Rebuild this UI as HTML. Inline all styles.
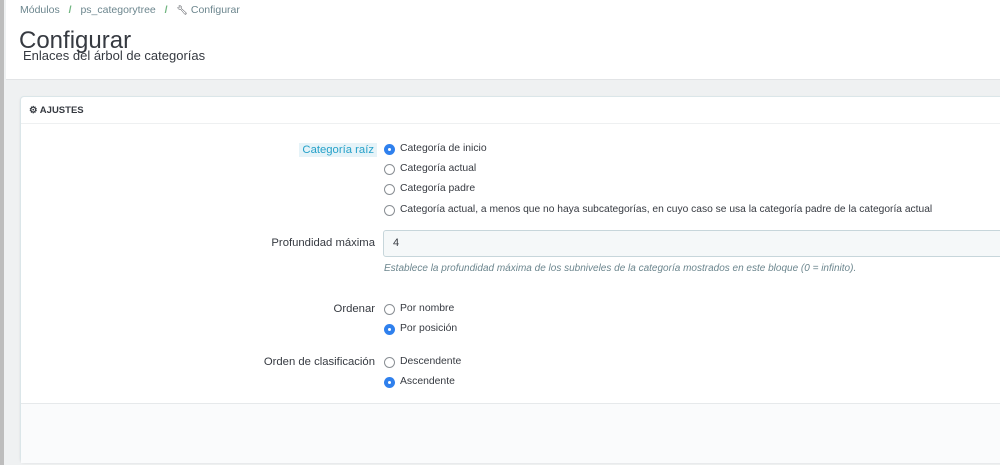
<!DOCTYPE html>
<html><head><meta charset="utf-8"><style>
*{margin:0;padding:0;box-sizing:border-box}
body{width:1000px;height:465px;overflow:hidden;background:#eff1f2;font-family:"Liberation Sans",sans-serif;color:#363a41;position:relative}
.a{position:absolute;white-space:nowrap}
.lbar{position:absolute;left:0;top:0;width:4px;height:465px;background:#bdbdbd}
.head{position:absolute;left:6px;top:0;width:994px;height:80px;background:#fff;border-bottom:1px solid #e2e4e6}
.panel{position:absolute;left:20px;top:96px;width:990px;height:366px;background:#fff;border:1px solid #dbe6e9;border-radius:4px;box-shadow:0 1px 2px rgba(0,0,0,.08)}
.ph{position:absolute;left:0;top:0;width:100%;height:27px;border-bottom:1px solid #eef0f1}
.foot{position:absolute;left:0;top:306px;width:100%;height:60px;background:#fafbfc;border-top:1px solid #e6e9eb}
.lbl{font-size:11.3px;text-align:right;right:625px;color:#363a41}
.opt{font-size:10.4px;color:#363a41}
.r{position:absolute;width:11px;height:11px;border-radius:50%;border:1px solid #8a8f94;background:#fff}
.r.on{border:none;background:#2f80ed}
.r.on:after{content:"";position:absolute;left:4px;top:4px;width:3px;height:3px;border-radius:50%;background:#fff}
</style></head><body>
<div class="lbar"></div>
<div class="head">
<div class="a" style="left:14px;top:4px;font-size:10.5px;color:#6c868e">Módulos <span style="color:#70b580;font-weight:bold;margin:0 6px">/</span> ps_categorytree <span style="color:#70b580;font-weight:bold;margin:0 6px">/</span> <span style="font-size:9px;color:#363a41">&#x1F527;&#xFE0E;</span> Configurar</div>
<div class="a" style="left:13px;top:27px;font-size:24px;color:#363a41">Configurar</div>
<div class="a" style="left:17px;top:48px;font-size:13px;color:#363a41">Enlaces del árbol de categorías</div>
</div>
<div class="panel">
<div class="ph"><div class="a" style="left:8px;top:8px;font-size:9.5px;font-weight:bold;color:#363a41">⚙ AJUSTES</div></div>
<div class="foot"></div>
</div>
<div class="a lbl" style="top:143px;background:#e6f3f8;color:#25a1c9;padding:1px 3px;right:623px">Categoría raíz</div>
<div class="r on" style="left:384px;top:144px"></div><div class="a opt" style="left:400px;top:143px">Categoría de inicio</div>
<div class="r" style="left:384px;top:164px"></div><div class="a opt" style="left:400px;top:163px">Categoría actual</div>
<div class="r" style="left:384px;top:184px"></div><div class="a opt" style="left:400px;top:183px">Categoría padre</div>
<div class="r" style="left:384px;top:205px"></div><div class="a opt" style="left:400px;top:204px;font-size:10.25px">Categoría actual, a menos que no haya subcategorías, en cuyo caso se usa la categoría padre de la categoría actual</div>
<div class="a lbl" style="top:237px">Profundidad máxima</div>
<div class="a" style="left:383px;top:230px;width:640px;height:27px;background:#f5f8f9;border:1px solid #c7d6db;border-radius:3px;font-size:11px;padding:6px 9px">4</div>
<div class="a" style="left:384px;top:263px;font-size:10px;font-style:italic;color:#6c868e">Establece la profundidad máxima de los subniveles de la categoría mostrados en este bloque (0 = infinito).</div>
<div class="a lbl" style="top:303px">Ordenar</div>
<div class="r" style="left:384px;top:304px"></div><div class="a opt" style="left:400px;top:303px">Por nombre</div>
<div class="r on" style="left:384px;top:324px"></div><div class="a opt" style="left:400px;top:323px">Por posición</div>
<div class="a lbl" style="top:356px">Orden de clasificación</div>
<div class="r" style="left:384px;top:357px"></div><div class="a opt" style="left:400px;top:356px">Descendente</div>
<div class="r on" style="left:384px;top:377px"></div><div class="a opt" style="left:400px;top:376px">Ascendente</div>
</body></html>
